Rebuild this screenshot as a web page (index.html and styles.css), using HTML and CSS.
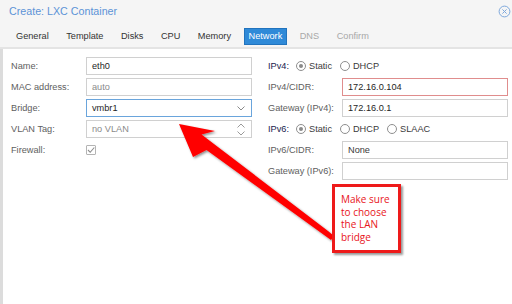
FILE: index.html
```html
<!DOCTYPE html>
<html>
<head>
<meta charset="utf-8">
<link rel="stylesheet" href="styles.css">
</head>
<body>
<div class="win">
  <div class="head">
    <div class="titlebar">
      <span class="title">Create: LXC Container</span>
      <svg class="close" width="13" height="13" viewBox="0 0 13 13"><circle cx="6.5" cy="6.5" r="5.4" fill="none" stroke="#7ea8dc" stroke-width="1"/><path d="M4.4 4.4 L8.6 8.6 M8.6 4.4 L4.4 8.6" stroke="#7ea8dc" stroke-width="1"/></svg>
    </div>
    <div class="tabs">
      <span class="tab">General</span>
      <span class="tab">Template</span>
      <span class="tab">Disks</span>
      <span class="tab">CPU</span>
      <span class="tab">Memory</span>
      <span class="tab active">Network</span>
      <span class="tab off">DNS</span>
      <span class="tab off">Confirm</span>
    </div>
  </div>
  <div class="body">
    <div class="col left">
      <div class="row"><span class="lbl">Name:</span><div class="inp">eth0</div></div>
      <div class="row"><span class="lbl">MAC address:</span><div class="inp ph">auto</div></div>
      <div class="row"><span class="lbl">Bridge:</span><div class="inp focus">vmbr1<svg class="trig" width="8" height="5" viewBox="0 0 8 5"><path d="M0.5 0.5 L4 4 L7.5 0.5" fill="none" stroke="#8a8a8a" stroke-width="1"/></svg></div></div>
      <div class="row"><span class="lbl">VLAN Tag:</span><div class="inp ph">no VLAN<svg class="spin" width="8" height="13" viewBox="0 0 8 13"><path d="M0.5 4.5 L4 1 L7.5 4.5 M0.5 8.5 L4 12 L7.5 8.5" fill="none" stroke="#9a9a9a" stroke-width="1"/></svg></div></div>
      <div class="row"><span class="lbl">Firewall:</span><span class="chk"><svg width="10" height="10" viewBox="0 0 10 10"><path d="M2 5 L4.2 7.3 L8.3 2.5" fill="none" stroke="#8c8c8c" stroke-width="1.1"/></svg></span></div>
    </div>
    <div class="col right">
      <div class="row"><span class="glbl">IPv4:</span><span class="radio on"></span><span class="rtxt">Static</span><span class="radio"></span><span class="rtxt">DHCP</span></div>
      <div class="row"><span class="lbl">IPv4/CIDR:</span><div class="inp bad">172.16.0.104</div></div>
      <div class="row"><span class="lbl">Gateway (IPv4):</span><div class="inp">172.16.0.1</div></div>
      <div class="row"><span class="glbl">IPv6:</span><span class="radio on"></span><span class="rtxt">Static</span><span class="radio"></span><span class="rtxt">DHCP</span><span class="radio"></span><span class="rtxt">SLAAC</span></div>
      <div class="row"><span class="lbl">IPv6/CIDR:</span><div class="inp dim">None</div></div>
      <div class="row"><span class="lbl">Gateway (IPv6):</span><div class="inp"></div></div>
    </div>
  </div>
  <svg class="arrow" width="512" height="304" viewBox="0 0 512 304">
    <defs>
      <filter id="sh" x="-10%" y="-10%" width="130%" height="130%">
        <feDropShadow dx="1.5" dy="1.5" stdDeviation="0.8" flood-color="#000" flood-opacity="0.45"/>
      </filter>
    </defs>
    <polygon filter="url(#sh)" fill="#ff0000" points="179,124 215,131 201.5,134.5 328,231 334,236 331,240 206.5,150 193,157"/>
  </svg>
  <div class="note">Make sure<br>to choose<br>the LAN<br>bridge</div>
</div>
</body>
</html>
```
FILE: styles.css
```css
html, body {
  margin: 0;
  padding: 0;
}
body {
  font-family: "Liberation Sans", Arial, sans-serif;
  font-size: 9.2px;
  background: #fff;
}
.win {
  position: relative;
  width: 512px;
  height: 304px;
  overflow: hidden;
  background: #fff;
}
.head {
  background: #f5f5f5;
  height: 47px;
  border-bottom: 2px solid #e4e4e4;
}
.titlebar {
  height: 22px;
  display: flex;
  align-items: center;
  justify-content: space-between;
  padding: 0 1px 0 9px;
}
.title {
  color: #5b93d7;
  font-size: 10.7px;
}
.close {
  display: block;
}
.tabs {
  display: flex;
  gap: 7.5px;
  padding-left: 11px;
  margin-top: 6px;
}
.tab {
  height: 17px;
  line-height: 15px;
  box-sizing: border-box;
  border: 1px solid transparent;
  padding: 0 4px;
  color: #333;
}
.tab.active {
  background: #2f8ad8;
  border-color: #2173bd;
  color: #fff;
}
.tab.off {
  color: #a8a8a8;
}
.body {
  display: flex;
  gap: 16px;
  height: 255px;
  box-sizing: border-box;
  border-left: 3px solid #dcdcdc;
  padding: 6px 0 0 8px;
}
.col {
  display: flex;
  flex-direction: column;
}
.left {
  width: 241px;
}
.right {
  width: 240px;
}
.row {
  display: flex;
  align-items: center;
  height: 21px;
}
.lbl {
  color: #5e5e5e;
  flex: none;
}
.left .lbl {
  width: 75px;
}
.right .lbl {
  width: 74px;
}
.glbl {
  width: 28px;
  flex: none;
  color: #20224e;
}
.inp {
  position: relative;
  width: 166px;
  height: 18px;
  box-sizing: border-box;
  border: 1px solid #d0d0d0;
  padding: 0 5px;
  line-height: 16px;
  color: #1e1e1e;
  background: #fff;
}
.inp.ph {
  color: #8a8a8a;
}
.inp.dim {
  color: #3a3a3a;
}
.inp.focus {
  border-color: #6aa5dc;
}
.inp.bad {
  border-color: #e08d8d;
}
.trig {
  position: absolute;
  right: 6px;
  top: 6px;
}
.spin {
  position: absolute;
  right: 6px;
  top: 2px;
}
.chk {
  width: 10px;
  height: 10px;
  box-sizing: border-box;
  border: 1px solid #b4b4b4;
  border-radius: 1px;
  display: flex;
  align-items: center;
  justify-content: center;
}
.chk svg {
  display: block;
  flex: none;
}
.radio {
  width: 10px;
  height: 10px;
  box-sizing: border-box;
  border: 1px solid #8e8e8e;
  border-radius: 50%;
  flex: none;
  display: flex;
  align-items: center;
  justify-content: center;
  background: #fff;
}
.radio.on::after {
  content: "";
  width: 4px;
  height: 4px;
  border-radius: 50%;
  background: #8a8a8a;
}
.rtxt {
  margin-left: 3px;
  margin-right: 8px;
  color: #3a3a3a;
}
.arrow {
  position: absolute;
  left: 0;
  top: 0;
  pointer-events: none;
}
.note {
  position: absolute;
  left: 332px;
  top: 184px;
  width: 69px;
  height: 69px;
  box-sizing: border-box;
  border: 3px solid #ee1a1a;
  background: #fff;
  box-shadow: 2px 2px 2px rgba(0, 0, 0, 0.4);
  padding: 6px 2px 0 6px;
  color: #e8141b;
  font-family: "Open Sans", "DejaVu Sans", sans-serif;
  font-size: 10px;
  line-height: 12.7px;
}
```
